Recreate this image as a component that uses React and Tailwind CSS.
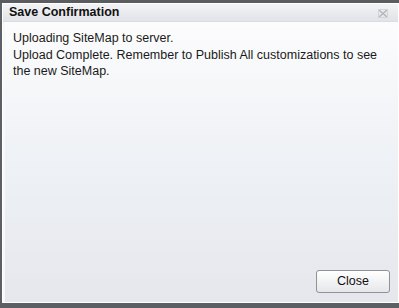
export default function App() {
  return (
    <div className="w-[399px] h-[308px] bg-[#5c5f63] flex flex-col overflow-hidden font-['Liberation_Sans',sans-serif]">
      <div className="h-[3px] bg-[#5a5c60]" />
      <div className="ml-[2px] flex-1 flex flex-col border border-white bg-white">
        <div className="h-[18px] flex items-center justify-between pl-[6px] pr-[10px] bg-gradient-to-b from-[#f3f3f5] to-[#e1e3e8] border-b border-[#d9dce2]">
          <span className="text-[12.5px] font-bold text-[#111]">Save Confirmation</span>
          <svg width="10" height="9" viewBox="0 0 10 9" className="mt-[1px]">
            <path d="M1 1 L9 8 M9 1 L1 8" stroke="#b4b7bc" strokeWidth="1.6" />
            <rect x="0.5" y="0.5" width="9" height="8" fill="none" stroke="#d2d4d8" />
          </svg>
        </div>
        <div className="flex-1 flex flex-col bg-gradient-to-b from-[#fcfcfd] via-[#eef1f5] to-[#e5e7ec] border-l-2 border-[#f7f8fa]">
          <div className="pt-[8px] pl-[8px] pr-[4px] text-[12.5px] leading-[16.5px] text-[#1a1a1a]">
            <p>Uploading SiteMap to server.</p>
            <p>Upload Complete. Remember to Publish All customizations to see the new SiteMap.</p>
          </div>
          <div className="mt-auto flex justify-end pr-[8px] pb-[9px]">
            <button className="w-[74px] h-[23px] rounded-[3px] border border-[#8d9399] bg-gradient-to-b from-white to-[#e6e7ea] text-[12.5px] text-[#111]">
              Close
            </button>
          </div>
        </div>
      </div>
      <div className="h-[5px]" />
    </div>
  )
}
